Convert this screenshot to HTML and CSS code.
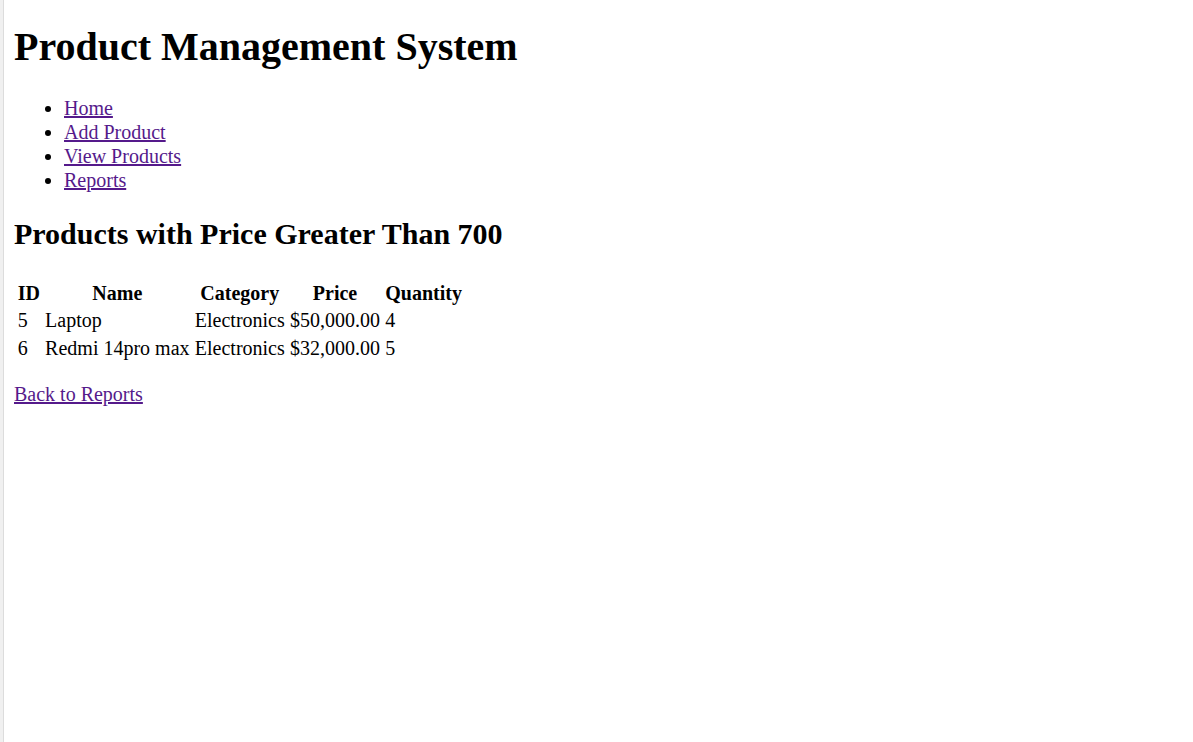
FILE: index.html
```html
<!DOCTYPE html>
<html lang="en">
<head>
<meta charset="utf-8">
<title>Products with Price Greater Than 700</title>
<link rel="stylesheet" href="styles.css">
</head>
<body>
<h1>Product Management System</h1>
<ul>
  <li><a href="#">Home</a></li>
  <li><a href="#">Add Product</a></li>
  <li><a href="#">View Products</a></li>
  <li><a href="#">Reports</a></li>
</ul>
<h2>Products with Price Greater Than 700</h2>
<table>
  <tr><th>ID</th><th>Name</th><th>Category</th><th>Price</th><th>Quantity</th></tr>
  <tr><td>5</td><td>Laptop</td><td>Electronics</td><td>$50,000.00</td><td>4</td></tr>
  <tr><td>6</td><td>Redmi 14pro max</td><td>Electronics</td><td>$32,000.00</td><td>5</td></tr>
</table>
<p><a href="#">Back to Reports</a></p>
</body>
</html>
```
FILE: styles.css
```css
html {
  padding-left: 4px;
  background: linear-gradient(to right, #f0f0f0 0, #f0f0f0 3px, #dcdcdc 3px, #dcdcdc 4px, #ffffff 4px) no-repeat;
  background-color: #fff;
  min-height: 100%;
}
body {
  margin: 8px;
  zoom: 1.25;
  font-family: "Liberation Serif", "Times New Roman", serif;
  color: #000;
}
h1 {
  margin: 10.24px 0 20.64px;
}
h2 {
  margin: 20.72px 0 21.52px;
}
li {
  line-height: 19.2px;
}
th,
td {
  padding: 1px 1.3px;
}
a {
  color: #551a8b;
}
```
